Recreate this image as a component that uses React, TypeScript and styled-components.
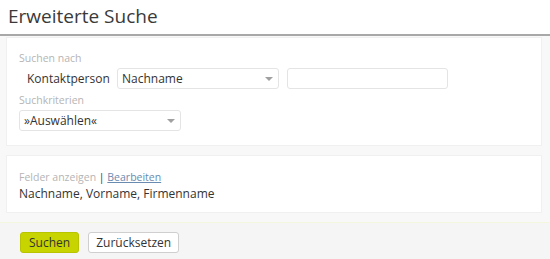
import React from "react";
import styled, { createGlobalStyle } from "styled-components";

const Global = createGlobalStyle`
  html, body { margin: 0; padding: 0; background: #ffffff; }
  body { font-family: "Open Sans", "Liberation Sans", sans-serif; color: #333; }
  * { box-sizing: border-box; }
`;

const Page = styled.div`
  width: 550px;
  height: 259px;
  display: flex;
  flex-direction: column;
  overflow: hidden;
`;

const Header = styled.div`
  height: 36px;
  padding: 4px 0 0 8px;
  border-bottom: 2px solid #a8a8a8;
`;

const Title = styled.h1`
  margin: 0;
  font-size: 19px;
  font-weight: 400;
  line-height: 24px;
  color: #3a3a3a;
`;

const Body = styled.div`
  flex: 1;
  background: #f8f8f8;
  padding: 1px 8px 9px 6px;
  display: flex;
  flex-direction: column;
  gap: 9px;
`;

const Card = styled.div<{ $pt: number; $pb: number }>`
  background: #ffffff;
  border: 1px solid #f0f0f0;
  padding: ${(p) => p.$pt}px 12px ${(p) => p.$pb}px 12px;
  display: flex;
  flex-direction: column;
`;

const Label = styled.div<{ $mt?: number }>`
  font-size: 10.5px;
  line-height: 14px;
  color: #b5b5b5;
  margin-top: ${(p) => p.$mt ?? 0}px;
`;

const Row = styled.div`
  display: flex;
  align-items: center;
  margin-top: 3px;
`;

const RowLabel = styled.span`
  font-size: 12px;
  color: #333;
  width: 98px;
  padding-left: 8px;
`;

const SelectBox = styled.div<{ $w: number }>`
  width: ${(p) => p.$w}px;
  height: 21px;
  border: 1px solid #e4e4e4;
  border-radius: 3px;
  background: #fff;
  display: flex;
  align-items: center;
  justify-content: space-between;
  padding: 0 5px 0 4px;
  font-size: 12px;
  color: #333;
`;

const Arrow = styled.span`
  width: 0;
  height: 0;
  border-left: 4px solid transparent;
  border-right: 4px solid transparent;
  border-top: 4px solid #a0a0a0;
  margin-top: 1px;
`;

const TextInput = styled.div`
  width: 161px;
  height: 21px;
  border: 1px solid #e4e4e4;
  border-radius: 3px;
  margin-left: 8px;
  background: #fff;
`;

const SelectWrap = styled.div`
  margin-top: 3px;
`;

const Link = styled.a`
  color: #6a8bb0;
  text-decoration: underline;
`;

const Sep = styled.span`
  color: #333;
`;

const Value = styled.div`
  font-size: 12px;
  line-height: 16px;
  color: #333;
  margin-top: 2px;
`;

const Footer = styled.div`
  height: 37px;
  background: #f5f5f5;
  border-top: 1px solid #f4f7de;
  display: flex;
  align-items: flex-start;
  padding: 9px 0 0 20px;
  gap: 9px;
`;

const Button = styled.button<{ $primary?: boolean }>`
  height: 21px;
  padding: 0 ${(p) => (p.$primary ? 8 : 7)}px;
  font-family: inherit;
  font-size: 12px;
  color: #333;
  border-radius: 3px;
  border: 1px solid ${(p) => (p.$primary ? "#b8c400" : "#cfcfcf")};
  background: ${(p) => (p.$primary ? "#c8d400" : "#ffffff")};
  line-height: 19px;
`;

export default function App() {
  return (
    <Page>
      <Global />
      <Header>
        <Title>Erweiterte Suche</Title>
      </Header>
      <Body>
        <Card $pt={13} $pb={14}>
          <Label>Suchen nach</Label>
          <Row>
            <RowLabel>Kontaktperson</RowLabel>
            <SelectBox $w={162}>
              <span>Nachname</span>
              <Arrow />
            </SelectBox>
            <TextInput />
          </Row>
          <Label $mt={4}>Suchkriterien</Label>
          <SelectWrap>
            <SelectBox $w={162}>
              <span>»Auswählen«</span>
              <Arrow />
            </SelectBox>
          </SelectWrap>
        </Card>
        <Card $pt={14} $pb={10}>
          <Label>
            Felder anzeigen <Sep>|</Sep> <Link>Bearbeiten</Link>
          </Label>
          <Value>Nachname, Vorname, Firmenname</Value>
        </Card>
      </Body>
      <Footer>
        <Button $primary>Suchen</Button>
        <Button>Zurücksetzen</Button>
      </Footer>
    </Page>
  );
}
